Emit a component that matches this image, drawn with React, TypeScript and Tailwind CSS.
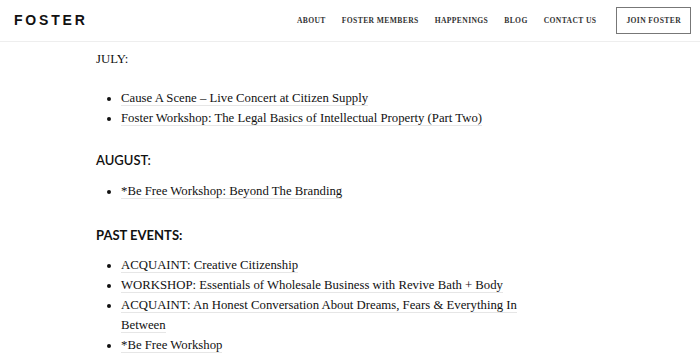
import React from "react";

const nav = ["About", "Foster Members", "Happenings", "Blog", "Contact Us"];

const EventLink = ({ children }: { children: React.ReactNode }) => (
  <a className="border-b border-[#e6e6e6] text-[#111]">{children}</a>
);

const EventList = ({ items }: { items: string[] }) => (
  <ul className="list-disc pl-[25px] leading-[20px]">
    {items.map((item) => (
      <li key={item} className="pl-0">
        <EventLink>{item}</EventLink>
      </li>
    ))}
  </ul>
);

export default function App() {
  return (
    <div className="w-[700px] h-[354px] overflow-hidden bg-white text-[#111]">
      <header className="flex h-[42px] items-center justify-between border-b border-[#eeeeee] pl-[14px] pr-[9px]">
        <div className="font-['Liberation_Sans',sans-serif] text-[14px] font-bold tracking-[0.2em]">
          FOSTER
        </div>
        <nav className="flex items-center font-['Liberation_Serif',serif] text-[7.6px] font-bold uppercase tracking-[0.05em] text-[#333]">
          <div className="flex gap-[16px]">
            {nav.map((n) => (
              <a key={n}>{n}</a>
            ))}
          </div>
          <a className="ml-[20px] border border-[#777] px-[9px] py-[7px]">Join Foster</a>
        </nav>
      </header>

      <main className="pl-[96px] font-['Liberation_Serif',serif] text-[12.75px]">
        <p className="mt-[7px] leading-[20px]">JULY:</p>
        <div className="mt-[19px]">
          <EventList
            items={[
              "Cause A Scene – Live Concert at Citizen Supply",
              "Foster Workshop: The Legal Basics of Intellectual Property (Part Two)",
            ]}
          />
        </div>
        <h3 className="mt-[22px] font-['Lato',sans-serif] text-[13px] font-semibold leading-[20px]">
          AUGUST:
        </h3>
        <div className="mt-[11px]">
          <EventList items={["*Be Free Workshop: Beyond The Branding"]} />
        </div>
        <h3 className="mt-[24px] font-['Lato',sans-serif] text-[13px] font-bold leading-[20px]">
          PAST EVENTS:
        </h3>
        <div className="mt-[10px] w-[430px]">
          <EventList
            items={[
              "ACQUAINT: Creative Citizenship",
              "WORKSHOP: Essentials of Wholesale Business with Revive Bath + Body",
              "ACQUAINT: An Honest Conversation About Dreams, Fears & Everything In Between",
              "*Be Free Workshop",
            ]}
          />
        </div>
      </main>
    </div>
  );
}
